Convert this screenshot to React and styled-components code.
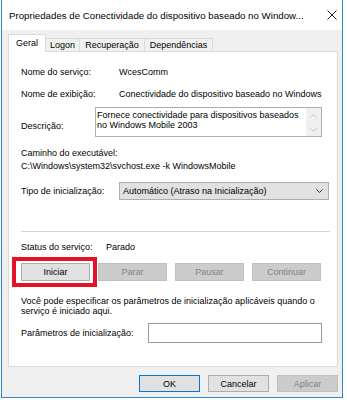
import React from "react";
import styled, { createGlobalStyle } from "styled-components";

const Global = createGlobalStyle`
  html, body {
    margin: 0;
    background: #ffffff;
  }
  body {
    font-family: "Liberation Sans", Arial, sans-serif;
    font-size: 9px;
    color: #000;
  }
`;

const Janela = styled.div`
  width: 342px;
  height: 398px;
  margin-left: 1px;
  box-sizing: border-box;
  border: 1px solid #2b88d8;
  border-top: none;
  background: #f0f0f0;
  display: flex;
  flex-direction: column;
`;

const BarraTitulo = styled.div`
  height: 30px;
  background: #fff;
  display: flex;
  align-items: center;
  padding-left: 7px;
`;

const Titulo = styled.div`
  flex: 1;
  font-size: 9.7px;
  white-space: nowrap;
`;

const Fechar = styled.div`
  width: 20px;
  display: flex;
  justify-content: center;
  align-items: center;
`;

const Corpo = styled.div`
  flex: 1;
  padding: 4px 4px 0 6px;
  display: flex;
  flex-direction: column;
`;

const Abas = styled.div`
  display: flex;
  align-items: flex-end;
  height: 17px;
`;

const Aba = styled.div`
  position: relative;
  box-sizing: border-box;
  width: ${(p) => p.$w}px;
  height: ${(p) => (p.$ativa ? 18 : 13)}px;
  margin-bottom: ${(p) => (p.$ativa ? -1 : 0)}px;
  margin-left: ${(p) => (p.$first ? 0 : -1)}px;
  z-index: ${(p) => (p.$ativa ? 2 : 1)};
  border: 1px solid #d9d9d9;
  border-bottom: none;
  background: ${(p) => (p.$ativa ? "#fff" : "#f0f0f0")};
  display: flex;
  align-items: center;
  justify-content: center;
  padding-bottom: ${(p) => (p.$ativa ? 2 : 0)}px;
  white-space: nowrap;
`;

const Painel = styled.div`
  height: 316px;
  box-sizing: border-box;
  background: #fff;
  border: 1px solid #d9d9d9;
  padding: 13px 7px 0 12px;
  display: flex;
  flex-direction: column;
`;

const Linha = styled.div`
  display: flex;
  align-items: ${(p) => (p.$top ? "flex-start" : "center")};
  margin-top: ${(p) => p.$mt || 0}px;
  height: ${(p) => p.$h}px;
`;

const Rotulo = styled.div`
  width: ${(p) => p.$w}px;
  flex: none;
  line-height: 14px;
  margin-top: ${(p) => p.$mt || 0}px;
  white-space: nowrap;
`;

const Valor = styled.div`
  line-height: 14px;
  white-space: nowrap;
`;

const CaixaDescricao = styled.div`
  width: 227px;
  height: 30px;
  box-sizing: border-box;
  border: 1px solid #abadb3;
  display: flex;
`;

const TextoDescricao = styled.div`
  flex: 1;
  line-height: 10px;
  padding: 2px 0 0 1px;
`;

const Rolagem = styled.div`
  width: 15px;
  background: #f0f0f0;
  display: flex;
  flex-direction: column;
  align-items: center;
  justify-content: space-between;
  padding: 6px 0 4px;
  box-sizing: border-box;
`;

const Bloco = styled.div`
  margin-top: ${(p) => p.$mt}px;
  line-height: 13px;
  white-space: nowrap;
`;

const Seletor = styled.div`
  width: 210px;
  height: 18px;
  box-sizing: border-box;
  background: #e1e1e1;
  border: 1px solid #adadad;
  display: flex;
  align-items: center;
  justify-content: space-between;
  padding: 0 5px 0 3px;
`;

const Separador = styled.div`
  height: 1px;
  background: #d4d4d4;
  margin-top: 31px;
`;

const LinhaBotoes = styled.div`
  display: flex;
  gap: 8px;
  margin-top: 9px;
`;

const Destaque = styled.div`
  position: relative;
  display: flex;
`;

const Moldura = styled.div`
  position: absolute;
  inset: -6px -7px -6px -9px;
  border: 4px solid #e81123;
  pointer-events: none;
`;

const Botao = styled.button`
  width: ${(p) => p.$w}px;
  height: ${(p) => p.$h}px;
  box-sizing: border-box;
  margin: 0;
  padding: 0;
  font: inherit;
  font-size: 9px;
  background: ${(p) => (p.disabled ? "#cccccc" : "#e1e1e1")};
  color: ${(p) => (p.disabled ? "#838383" : "#000")};
  border: 1px solid
    ${(p) => (p.$padrao ? "#0078d7" : p.disabled ? "#bfbfbf" : "#adadad")};
  border-radius: 0;
`;

const Nota = styled.div`
  margin-top: 15px;
  line-height: 10px;
`;

const Entrada = styled.div`
  width: 174px;
  height: 20px;
  box-sizing: border-box;
  border: 1px solid #9a9a9a;
  background: #fff;
`;

const Rodape = styled.div`
  display: flex;
  justify-content: flex-end;
  gap: 8px;
  margin-top: 8px;
`;

const Chevron = ({ up, color = "#333", w = 7 }) => (
  <svg width={w} height="4" viewBox="0 0 7 4">
    <path
      d={up ? "M0.5 3.5 L3.5 0.5 L6.5 3.5" : "M0.5 0.5 L3.5 3.5 L6.5 0.5"}
      fill="none"
      stroke={color}
      strokeWidth="1"
    />
  </svg>
);

export default function App() {
  return (
    <>
      <Global />
      <Janela>
        <BarraTitulo>
          <Titulo>
            Propriedades de Conectividade do dispositivo baseado no Window...
          </Titulo>
          <Fechar>
            <svg width="10" height="10" viewBox="0 0 10 10">
              <path d="M0.5 0.5 L9.5 9.5 M9.5 0.5 L0.5 9.5" stroke="#222" strokeWidth="1" />
            </svg>
          </Fechar>
        </BarraTitulo>
        <Corpo>
          <Abas>
            <Aba $ativa $first $w={38}>Geral</Aba>
            <Aba $w={35}>Logon</Aba>
            <Aba $w={66}>Recuperação</Aba>
            <Aba $w={69}>Dependências</Aba>
          </Abas>
          <Painel>
            <Linha $h={14}>
              <Rotulo $w={98}>Nome do serviço:</Rotulo>
              <Valor>WcesComm</Valor>
            </Linha>
            <Linha $h={14} $mt={8}>
              <Rotulo $w={98}>Nome de exibição:</Rotulo>
              <Valor>Conectividade do dispositivo baseado no Windows</Valor>
            </Linha>
            <Linha $h={30} $mt={6} $top>
              <Rotulo $w={74} $mt={12}>Descrição:</Rotulo>
              <CaixaDescricao>
                <TextoDescricao>
                  Fornece conectividade para dispositivos baseados
                  <br />
                  no Windows Mobile 2003
                </TextoDescricao>
                <Rolagem>
                  <Chevron up color="#c2c2c2" />
                  <Chevron color="#c2c2c2" />
                </Rolagem>
              </CaixaDescricao>
            </Linha>
            <Bloco $mt={10}>
              Caminho do executável:
              <br />
              C:\Windows\system32\svchost.exe -k WindowsMobile
            </Bloco>
            <Linha $h={18} $mt={9}>
              <Rotulo $w={98}>Tipo de inicialização:</Rotulo>
              <Seletor>
                <span>Automático (Atraso na Inicialização)</span>
                <Chevron />
              </Seletor>
            </Linha>
            <Separador />
            <Linha $h={14} $mt={8}>
              <Rotulo $w={85}>Status do serviço:</Rotulo>
              <Valor>Parado</Valor>
            </Linha>
            <LinhaBotoes>
              <Destaque>
                <Botao $w={69} $h={18}>Iniciar</Botao>
                <Moldura />
              </Destaque>
              <Botao $w={69} $h={18} disabled>Parar</Botao>
              <Botao $w={69} $h={18} disabled>Pausar</Botao>
              <Botao $w={69} $h={18} disabled>Continuar</Botao>
            </LinhaBotoes>
            <Nota>
              Você pode especificar os parâmetros de inicialização aplicáveis quando o
              <br />
              serviço é iniciado aqui.
            </Nota>
            <Linha $h={20} $mt={7}>
              <Rotulo $w={127}>Parâmetros de inicialização:</Rotulo>
              <Entrada />
            </Linha>
          </Painel>
          <Rodape>
            <Botao $w={61} $h={17} $padrao>OK</Botao>
            <Botao $w={61} $h={17}>Cancelar</Botao>
            <Botao $w={61} $h={17} disabled>Aplicar</Botao>
          </Rodape>
        </Corpo>
      </Janela>
    </>
  );
}
